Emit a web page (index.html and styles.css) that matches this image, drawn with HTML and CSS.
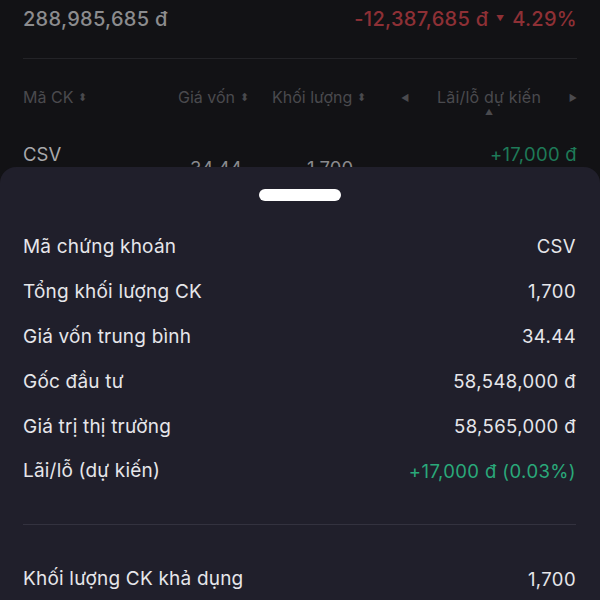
FILE: index.html
```html
<!DOCTYPE html>
<html>
<head>
  <title>Danh mục</title>
  <link rel="stylesheet" href="styles.css">
</head>
<body>
  <div id="page">
    <div class="summary">
      <span class="total">288,985,685 đ</span>
      <span class="loss">-12,387,685 đ <span class="caret">▼</span> 4.29%</span>
    </div>
    <div class="rule"></div>

    <div class="thead">
      <div class="col code">Mã CK <span class="sort">⬍</span></div>
      <div class="col cost">Giá vốn <span class="sort">⬍</span></div>
      <div class="col vol">Khối lượng <span class="sort">⬍</span></div>
      <div class="col pnl">
        <span class="arrow">◀</span>
        <span class="pnl-label">Lãi/lỗ dự kiến<span class="up">▲</span></span>
        <span class="arrow">▶</span>
      </div>
    </div>

    <div class="trow">
      <div class="col code">CSV</div>
      <div class="col cost low">34.44</div>
      <div class="col vol low">1,700</div>
      <div class="col pnl gain">+17,000 đ</div>
    </div>
  </div>

  <div id="sheet">
    <div class="handle"></div>
    <div class="info">
      <div class="line"><span class="key">Mã chứng khoán</span><span class="val">CSV</span></div>
      <div class="line"><span class="key">Tổng khối lượng CK</span><span class="val">1,700</span></div>
      <div class="line"><span class="key">Giá vốn trung bình</span><span class="val">34.44</span></div>
      <div class="line"><span class="key">Gốc đầu tư</span><span class="val">58,548,000 đ</span></div>
      <div class="line"><span class="key">Giá trị thị trường</span><span class="val">58,565,000 đ</span></div>
      <div class="line"><span class="key">Lãi/lỗ (dự kiến)</span><span class="val plus">+17,000 đ (0.03%)</span></div>
    </div>
    <div class="sheet-rule"></div>
    <div class="info">
      <div class="line"><span class="key">Khối lượng CK khả dụng</span><span class="val">1,700</span></div>
    </div>
  </div>
</body>
</html>
```

FILE: styles.css
```css
body {
  margin: 0;
  background: #121215;
  font-family: Inter, "Noto Sans", sans-serif;
  overflow: hidden;
  height: 600px;
}

#page {
  padding: 0 23px;
}

.summary {
  display: flex;
  justify-content: space-between;
  align-items: center;
  height: 38px;
  font-size: 20px;
  font-weight: 500;
  letter-spacing: 0.3px;
}

.total {
  color: #8c8c8e;
}

.loss {
  color: #8e3035;
}

.caret {
  font-size: 8px;
  vertical-align: 5px;
  margin: 0 2px;
}

.rule {
  height: 1px;
  background: #232327;
  margin-top: 20px;
}

.thead {
  display: flex;
  height: 56px;
  padding-top: 28px;
  box-sizing: border-box;
  font-size: 16px;
  color: #4a4a4e;
}

.sort {
  font-size: 11px;
  vertical-align: 2px;
}

.col.code { width: 155px; }
.col.cost { width: 94px; }
.col.vol { width: 117px; }
.col.pnl {
  flex: 1;
  display: flex;
  justify-content: space-between;
  text-align: right;
}

.thead .pnl {
  padding-left: 12px;
}

.arrow {
  font-size: 9px;
  padding-top: 5px;
}

.pnl-label {
  position: relative;
  letter-spacing: 0.2px;
}

.up {
  position: absolute;
  left: 48px;
  top: 20px;
  font-size: 8px;
}

.trow {
  display: flex;
  margin-top: 28px;
  font-size: 18.5px;
  color: #a8a8ab;
}

.trow .low {
  padding-top: 14px;
  color: #8a8a8e;
}

.trow .cost { padding-left: 12px; box-sizing: border-box; }
.trow .vol { padding-left: 35px; box-sizing: border-box; }

.trow .gain {
  justify-content: flex-end;
  color: #1e7a58;
  letter-spacing: 0.3px;
}

#sheet {
  position: absolute;
  top: 167px;
  left: 0;
  right: 0;
  bottom: 0;
  background: #201f2b;
  border-radius: 16px 16px 0 0;
  padding: 22px 24px 0 23px;
  color: #e6e6ea;
  font-size: 18.5px;
}

.handle {
  width: 82px;
  height: 12px;
  margin: 0 auto;
  background: #ffffff;
  border-radius: 6px;
}

.info {
  display: flex;
  flex-direction: column;
}

.handle + .info {
  margin-top: 23px;
}

.line {
  display: flex;
  justify-content: space-between;
  align-items: center;
  height: 44.9px;
}

.key {
  font-size: 19px;
  letter-spacing: 0.2px;
}

.val {
  letter-spacing: 0.4px;
}

.plus {
  color: #2aa97a;
}

.sheet-rule {
  height: 1px;
  background: #33323f;
  margin: 31px 0 31px;
}
```
